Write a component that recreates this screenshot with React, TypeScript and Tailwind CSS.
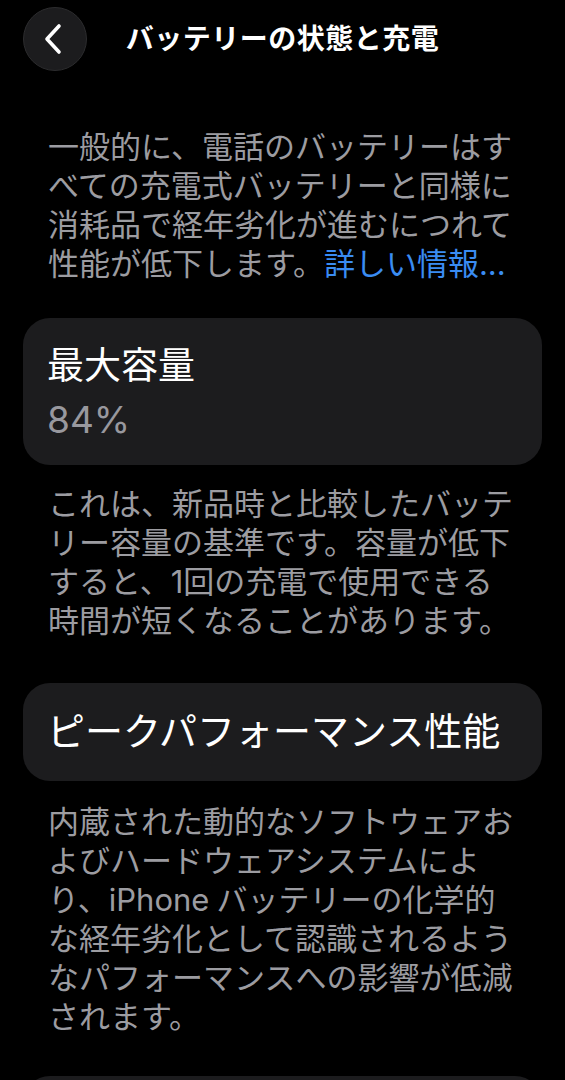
const font = "font-['Inter','Noto_Sans_CJK_JP',sans-serif]";

function BackButton() {
  return (
    <button className="flex h-16 w-16 items-center justify-center rounded-full border border-[#2c2c2e] bg-[#1c1c1e] pr-[5px]">
      <svg width="20" height="32" viewBox="0 0 20 32" fill="none">
        <path d="M16 3 L4 16 L16 29" stroke="white" strokeWidth="3.6" strokeLinecap="round" strokeLinejoin="round" />
      </svg>
    </button>
  );
}

function Footer({ children, className = "" }: { children: React.ReactNode; className?: string }) {
  return (
    <p className={`pl-[48px] pr-[47px] text-[31px] leading-[39px] text-[#9c9ca1] ${className}`}>{children}</p>
  );
}

export default function App() {
  return (
    <div className={`min-h-screen overflow-hidden bg-black text-white ${font}`}>
      <header className="grid grid-cols-[64px_1fr_64px] items-center px-[23px] pt-[7px]">
        <BackButton />
        <h1 className="text-center text-[28px] font-semibold leading-[36px] tracking-[0.5px]">バッテリーの状態と充電</h1>
        <div />
      </header>

      <Footer className="mt-[56px]">
        一般的に、電話のバッテリーはすべての充電式バッテリーと同様に消耗品で経年劣化が進むにつれて性能が低下します。
        <span className="text-[#3a8cf2]">詳しい情報...</span>
      </Footer>

      <section className="mx-[23px] mt-[35px] rounded-[27px] bg-[#1c1c1e] px-[24px] pb-[23px] pt-[26px]">
        <div className="text-[37px] leading-[44px]">最大容量</div>
        <div className="mt-[10px] text-[37px] leading-[44px] text-[#98989e]">84%</div>
      </section>

      <Footer className="mt-[19px]">
        これは、新品時と比較したバッテリー容量の基準です。容量が低下すると、1回の充電で使用できる時間が短くなることがあります。
      </Footer>

      <section className="mx-[23px] mt-[43px] rounded-[27px] bg-[#1c1c1e] px-[24px] pb-[28px] pt-[26px]">
        <div className="text-[38px] leading-[44px]">ピークパフォーマンス性能</div>
      </section>

      <Footer className="mt-[21px]">
        内蔵された動的なソフトウェアおよびハードウェアシステムにより、<span className="mr-[7px]">iPhone</span>バッテリーの化学的な経年劣化として認識されるようなパフォーマンスへの影響が低減されます。
      </Footer>

      <section className="mx-[23px] mt-[40px] h-[98px] rounded-[27px] bg-[#1c1c1e]" />
    </div>
  );
}
